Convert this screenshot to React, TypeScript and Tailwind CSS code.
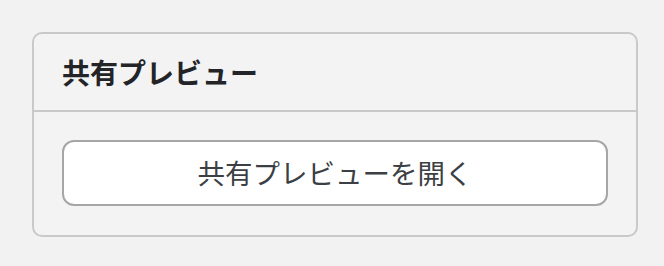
const App = () => {
  return (
    <div
      className="min-h-screen w-full bg-[#f2f2f2] pl-[32px] pr-[26px] pt-[32px]"
      style={{ fontFamily: '"Noto Sans CJK JP", "Noto Sans", sans-serif' }}
    >
      <section className="w-[606px] rounded-[10px] border-2 border-[#c9c9c9] bg-[#f3f3f3]">
        {/* Header */}
        <div className="flex h-[78px] items-center border-b-2 border-[#c9c9c9] px-[28px]">
          <h2 className="text-[28px] font-bold leading-none text-[#222427]">共有プレビュー</h2>
        </div>

        {/* Body */}
        <div className="px-[28px] pt-[28px] pb-[29px]">
          <button
            type="button"
            className="flex h-[66px] w-full items-center justify-center rounded-[12px] border-2 border-[#a6a6a6] bg-white text-[27.5px] leading-none text-[#3c3f44]"
          >
            共有プレビューを開く
          </button>
        </div>
      </section>
    </div>
  );
};

export default App;
